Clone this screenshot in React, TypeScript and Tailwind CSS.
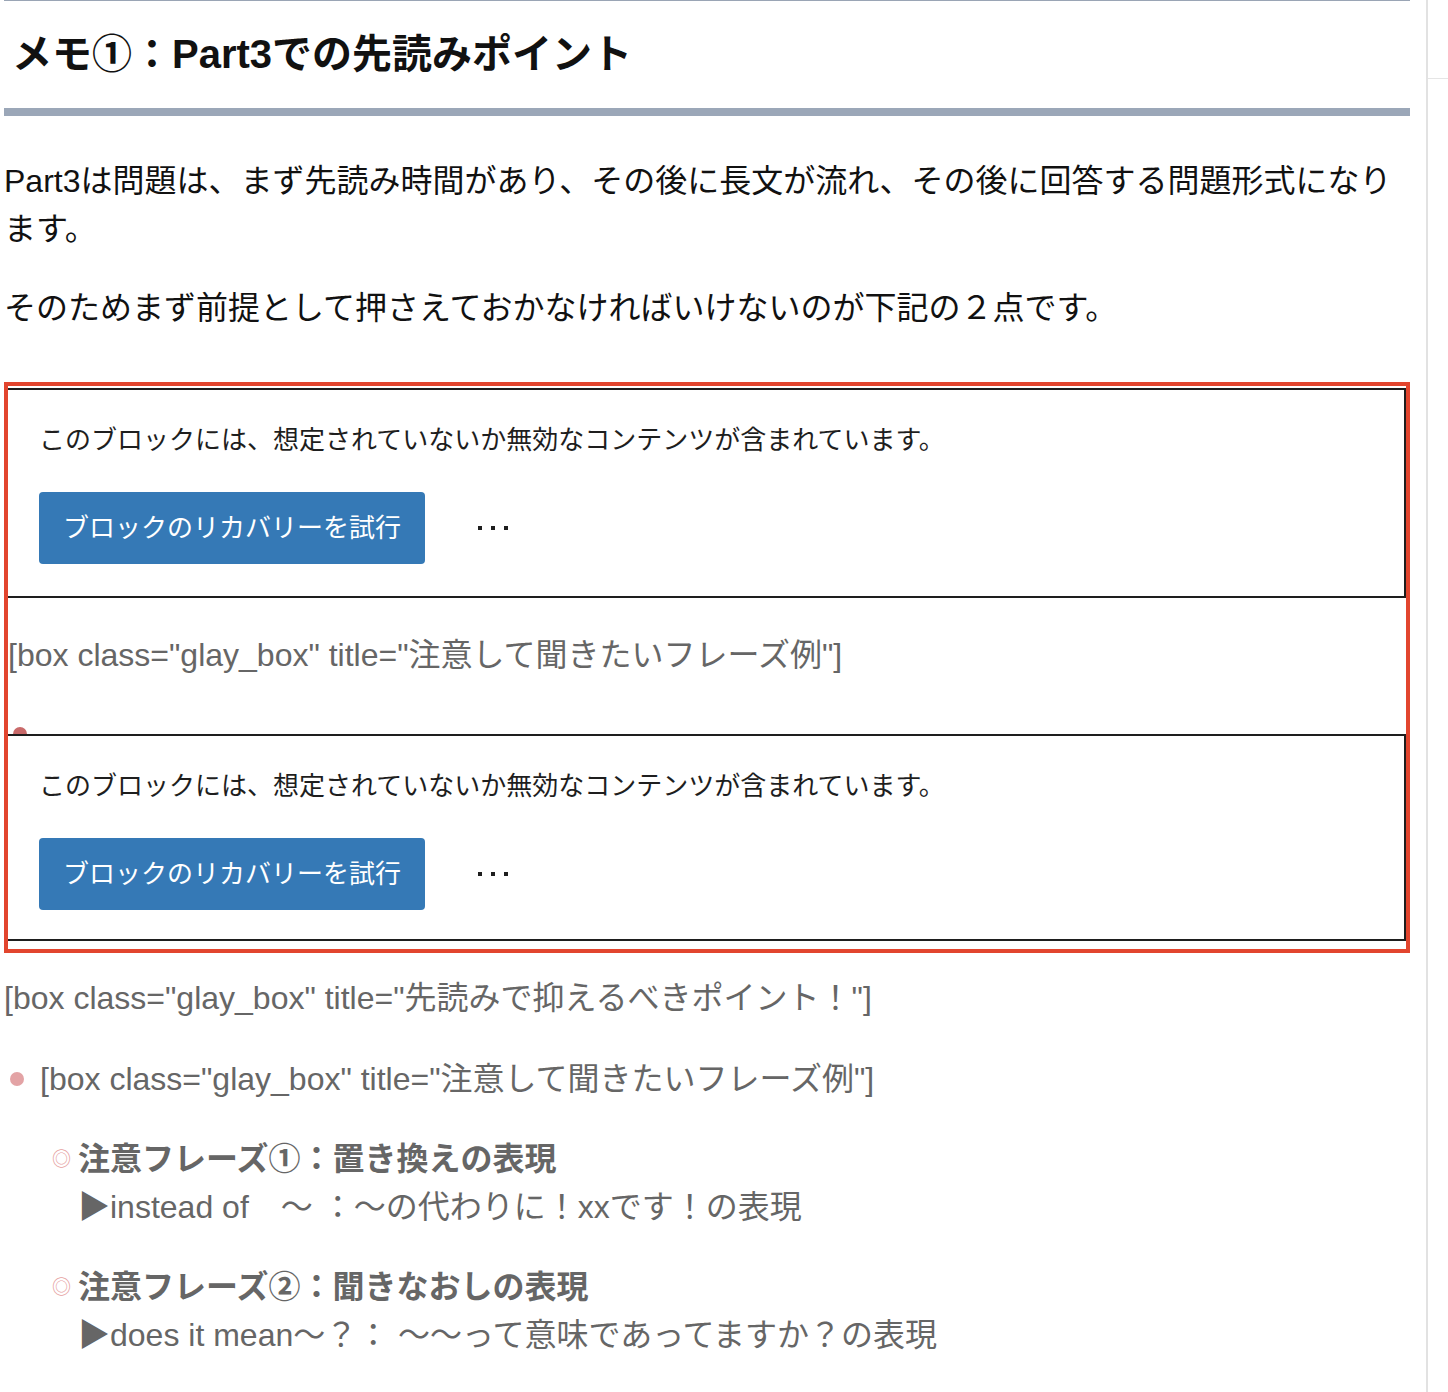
const FONT = "font-['Liberation_Sans','Noto_Sans_CJK_JP',sans-serif]"

function InvalidBlock({ last }: { last?: boolean }) {
  return (
    <div
      className={`border-y-2 border-r-2 border-[#1e1e1e] bg-white px-[31px] pt-[32px] ${
        last ? 'pb-[29px]' : 'pb-[32px]'
      }`}
    >
      <p className="text-[26px] leading-[36px] text-[#1e1e1e]">
        このブロックには、想定されていないか無効なコンテンツが含まれています。
      </p>
      <div className="mt-[34px] flex items-center">
        <button className="h-[72px] rounded-[4px] bg-[#3579b6] px-[24px] text-[26px] text-white">
          ブロックのリカバリーを試行
        </button>
        <div className="ml-[53px] flex items-center gap-[9px]">
          <span className="h-[4px] w-[4px] bg-[#1e1e1e]" />
          <span className="h-[4px] w-[4px] bg-[#1e1e1e]" />
          <span className="h-[4px] w-[4px] bg-[#1e1e1e]" />
        </div>
      </div>
    </div>
  )
}

function Phrase({ title, body }: { title: string; body: string }) {
  return (
    <li className="flex">
      <span className="w-[26px] pt-[1px] text-[19px] leading-[48px] text-[#e6a1a1]">◎</span>
      <div>
        <p className="text-[32px] font-bold leading-[48px] text-[#666]">{title}</p>
        <p className="text-[32px] leading-[48px] text-[#666]">{body}</p>
      </div>
    </li>
  )
}

export default function App() {
  return (
    <div className={`flex h-[1392px] w-[1448px] overflow-hidden bg-white ${FONT}`}>
      <main className="w-[1428px] border-r-2 border-[#e2e2e2] pl-[4px] pr-[16px]">
        <div className="h-[1px] bg-[#9aa5b5]" />
        <h2 className="pt-[25px] pb-[26px] pl-[8px] text-[40px] font-bold leading-[56px] text-[#111]">
          メモ①：Part3での先読みポイント
        </h2>
        <div className="h-[8px] bg-[#9ba7b8]" />

        <p className="mt-[41px] text-[32px] leading-[48px] text-[#111]">
          Part3は問題は、まず先読み時間があり、その後に長文が流れ、その後に回答する問題形式になります。
        </p>
        <p className="mt-[31px] text-[32px] leading-[48px] text-[#111]">
          そのためまず前提として押さえておかなければいけないのが下記の２点です。
        </p>

        <div className="mt-[50px] border-4 border-[#e2452e] pt-[2px] pb-[8px]">
          <InvalidBlock />
          <div className="flex h-[136px] flex-col overflow-hidden">
            <p className="mt-[33px] text-[32px] leading-[48px] text-[#666]">
              [box class="glay_box" title="注意して聞きたいフレーズ例"]
            </p>
            <span className="mt-auto mb-[-7px] ml-[5px] h-[14px] w-[14px] shrink-0 rounded-full bg-[#c96a6a]" />
          </div>
          <InvalidBlock last />
        </div>

        <p className="mt-[21px] text-[32px] leading-[48px] text-[#666]">
          [box class="glay_box" title="先読みで抑えるべきポイント！"]
        </p>

        <ul className="mt-[33px]">
          <li className="flex items-center">
            <span className="ml-[6px] h-[14px] w-[14px] rounded-full bg-[#e3a3a5]" />
            <span className="ml-[16px] text-[32px] leading-[48px] text-[#666]">
              [box class="glay_box" title="注意して聞きたいフレーズ例"]
            </span>
          </li>
          <li className="mt-[32px] ml-[48px]">
            <ul className="flex flex-col gap-[32px]">
              <Phrase title="注意フレーズ①：置き換えの表現" body="▶instead of　～ ：～の代わりに！xxです！の表現" />
              <Phrase title="注意フレーズ②：聞きなおしの表現" body="▶does it mean～？： ～～って意味であってますか？の表現" />
            </ul>
          </li>
        </ul>
      </main>
      <aside className="flex-1">
        <div className="mt-[78px] h-[1px] bg-[#e5e5e5]" />
      </aside>
    </div>
  )
}
